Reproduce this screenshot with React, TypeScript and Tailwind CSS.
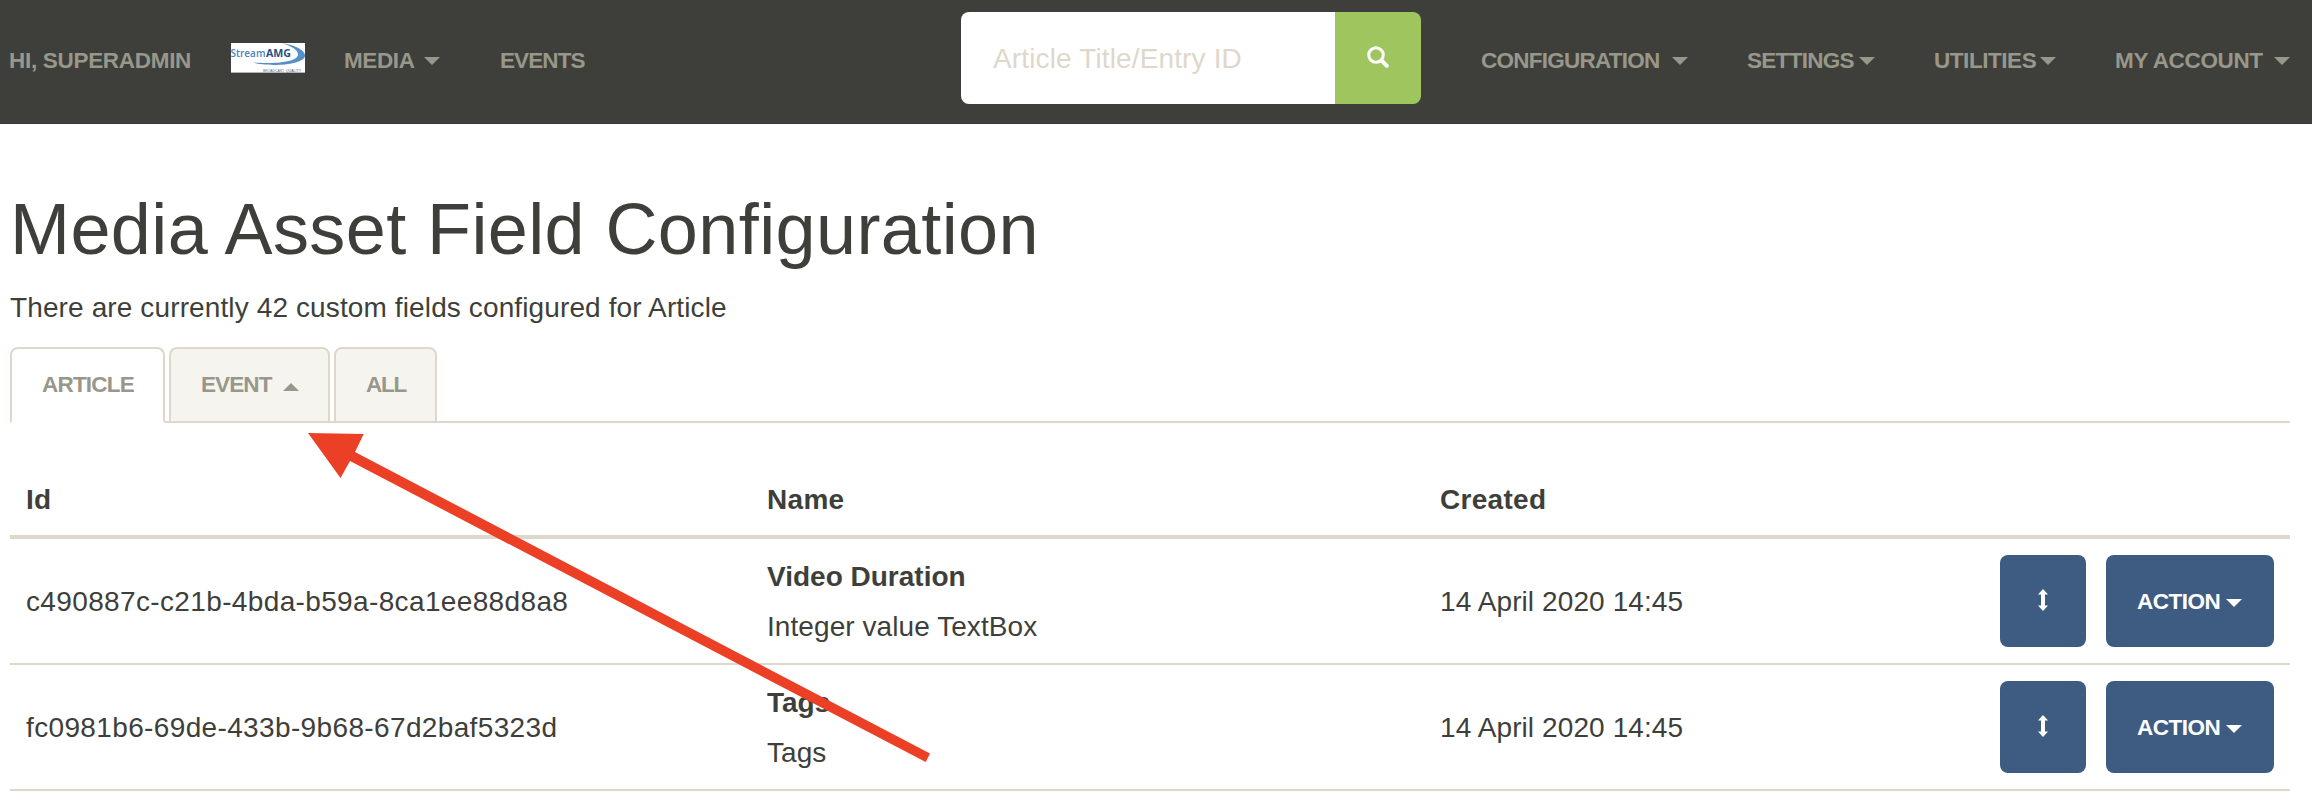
import React from 'react';

const navText = 'whitespace-nowrap text-[22.5px] leading-[34px] font-bold text-[#98978b]';

function Caret({ up = false, className = '' }: { up?: boolean; className?: string }) {
  return (
    <svg className={`h-2 w-4 shrink-0 ${className}`} viewBox="0 0 16 8" fill="currentColor">
      <path d={up ? 'M0 8h16L8 0z' : 'M0 0h16L8 8z'} />
    </svg>
  );
}

function NavItem({ label, className, caret = false }: { label: string; className: string; caret?: boolean }) {
  return (
    <a className={`flex shrink-0 items-center justify-between pt-[3px] ${navText} ${className}`}>
      <span>{label}</span>
      {caret && <Caret className="mt-px" />}
    </a>
  );
}

function Logo() {
  return (
    <svg className="-mt-[2px] h-[30px] w-[74px] shrink-0" viewBox="0 0 74 30">
      <rect width="74" height="30" fill="#fff" />
      <rect y="29" width="74" height="1" fill="#b5b5b0" />
      <path d="M51 0C64 2 74 7 74 12.500C74 19 58 22 43 22C34 22 26 21 22 19.500C38 21 66 20 67 12C67.500 7 60 3 51 0z" fill="#5590c6" />
      <text x="-0.500" y="14" fontFamily="Open Sans, sans-serif" fontSize="11" fontWeight="600" fill="#4a86bd" textLength="35" lengthAdjust="spacingAndGlyphs">Stream</text>
      <text x="35" y="14" fontFamily="Open Sans, sans-serif" fontSize="11" fontWeight="700" fill="#1f4f86" textLength="25" lengthAdjust="spacingAndGlyphs">AMG</text>
      <text x="32" y="28.500" fontFamily="Liberation Sans, sans-serif" fontSize="4" fill="#3a6ea5" textLength="21" lengthAdjust="spacingAndGlyphs">BROADCAST</text>
      <text x="55" y="28.500" fontFamily="Liberation Sans, sans-serif" fontSize="4" fill="#555" textLength="15" lengthAdjust="spacingAndGlyphs">QUALITY</text>
    </svg>
  );
}

function Navbar() {
  return (
    <nav className="flex h-[124px] items-start border-b border-[#383934] bg-[#3e3f3a]">
      <div className="flex h-[118px] w-[961px] shrink-0 items-center pl-[9px]">
        <NavItem label="HI, SUPERADMIN" className="w-[222px] tracking-[-0.3px]" />
        <Logo />
        <NavItem label="MEDIA" caret className="ml-[39px] w-[96px] tracking-[-0.4px]" />
        <NavItem label="EVENTS" className="ml-[60px] tracking-[-0.9px]" />
      </div>
      <div className="mt-3 flex h-[92px] w-[460px] shrink-0 overflow-hidden rounded-lg">
        <div className="flex w-[374px] items-center bg-white pt-px pl-8 text-[28px] tracking-[0.14px] text-[#dfd7ca]">Article Title/Entry ID</div>
        <button className="flex flex-1 items-center justify-center bg-[#9fc55f] pb-[2px]">
          <svg className="h-[22px] w-[22px]" viewBox="0 0 22 22" fill="none" stroke="#fff">
            <circle cx="9" cy="9" r="7.300" strokeWidth="3" />
            <path d="M14.500 14.500l5.300 5.300" strokeWidth="4" strokeLinecap="round" />
          </svg>
        </button>
      </div>
      <div className="flex h-[118px] items-center pl-[60px]">
        <NavItem label="CONFIGURATION" caret className="w-[207px] tracking-[-0.75px]" />
        <NavItem label="SETTINGS" caret className="ml-[59px] w-[128px] tracking-[-0.7px]" />
        <NavItem label="UTILITIES" caret className="ml-[59px] w-[122px] tracking-[-0.45px]" />
        <NavItem label="MY ACCOUNT" caret className="ml-[59px] w-[175px] tracking-[-0.35px]" />
      </div>
    </nav>
  );
}

function Tab({ label, active = false, caret = false, className }: { label: string; active?: boolean; caret?: boolean; className: string }) {
  return (
    <a
      className={`flex h-[76px] items-start rounded-t-lg border-2 border-[#dfd7ca] pt-[19px] pl-[30px] ${navText} ${
        active ? 'border-b-white bg-white' : 'bg-[#f6f4ef]'
      } ${className}`}
    >
      {label}
      {caret && <Caret up className="mt-[15px] ml-[11px]" />}
    </a>
  );
}

const rows = [
  { id: 'c490887c-c21b-4bda-b59a-8ca1ee88d8a8', name: 'Video Duration', type: 'Integer value TextBox', created: '14 April 2020 14:45' },
  { id: 'fc0981b6-69de-433b-9b68-67d2baf5323d', name: 'Tags', type: 'Tags', created: '14 April 2020 14:45' },
];

function Row({ row }: { row: (typeof rows)[number] }) {
  return (
    <div className="flex h-[126px] items-center border-b-2 border-[#dfd7ca] pr-4 pl-4">
      <div className="w-[741px] pt-[2px] tracking-[0.36px]">{row.id}</div>
      <div className="w-[673px] pt-[2px] leading-[50px]">
        <div className="font-bold">{row.name}</div>
        <div className="tracking-[0.07px]">{row.type}</div>
      </div>
      <div className="flex-1 pt-[2px] tracking-[0.1px]">{row.created}</div>
      <div className="flex gap-5">
        <button className="flex h-[92px] w-[86px] items-center justify-center rounded-lg bg-[#3e5c82] pr-px pb-[2px]">
          <svg className="h-[22px] w-[10px]" viewBox="0 0 10 22" fill="#fff">
            <path d="M5 0l5 5.500H7v11h3L5 22l-5-5.500h3v-11H0z" />
          </svg>
        </button>
        <button className="flex h-[92px] w-[168px] items-center justify-between rounded-lg bg-[#3e5c82] pt-px pr-8 pl-[31px] text-[22.5px] font-bold tracking-[-0.5px] text-white">
          ACTION
          <Caret className="mt-[3px]" />
        </button>
      </div>
    </div>
  );
}

export default function App() {
  return (
    <div className="relative h-[806px] w-[2312px] overflow-hidden bg-white font-['Liberation_Sans',Arial,sans-serif] text-[28px] text-[#3e3f3a]">
      <Navbar />
      <main className="pr-[22px] pl-[10px]">
        <h1 className="mt-[65px] text-[72px] leading-[80px] tracking-[0.4px]">Media Asset Field Configuration</h1>
        <p className="mt-[19px] leading-[40px] tracking-[0.12px]">There are currently 42 custom fields configured for Article</p>
        <div className="mt-[19px] flex h-[76px] gap-1 border-b-2 border-[#dfd7ca]">
          <Tab label="ARTICLE" active className="w-[155px] tracking-[-0.8px]" />
          <Tab label="EVENT" caret className="w-[161px] tracking-[-0.9px]" />
          <Tab label="ALL" className="w-[103px] tracking-[-1.2px]" />
        </div>
        <div className="flex h-[116px] items-end border-b-4 border-[#dfd7ca] pb-[15px] pl-4 leading-[40px] font-bold tracking-[0.3px]">
          <div className="w-[741px]">Id</div>
          <div className="w-[673px]">Name</div>
          <div>Created</div>
        </div>
        {rows.map((row) => (
          <Row key={row.id} row={row} />
        ))}
      </main>
      <svg className="pointer-events-none absolute top-[420px] left-[290px] h-[360px] w-[660px]" viewBox="290 420 660 360" fill="#eb4026">
        <path d="M308 433L363.700 434L355 452L930 753.500L925.700 762L350 461L340.500 478z" />
      </svg>
    </div>
  );
}
